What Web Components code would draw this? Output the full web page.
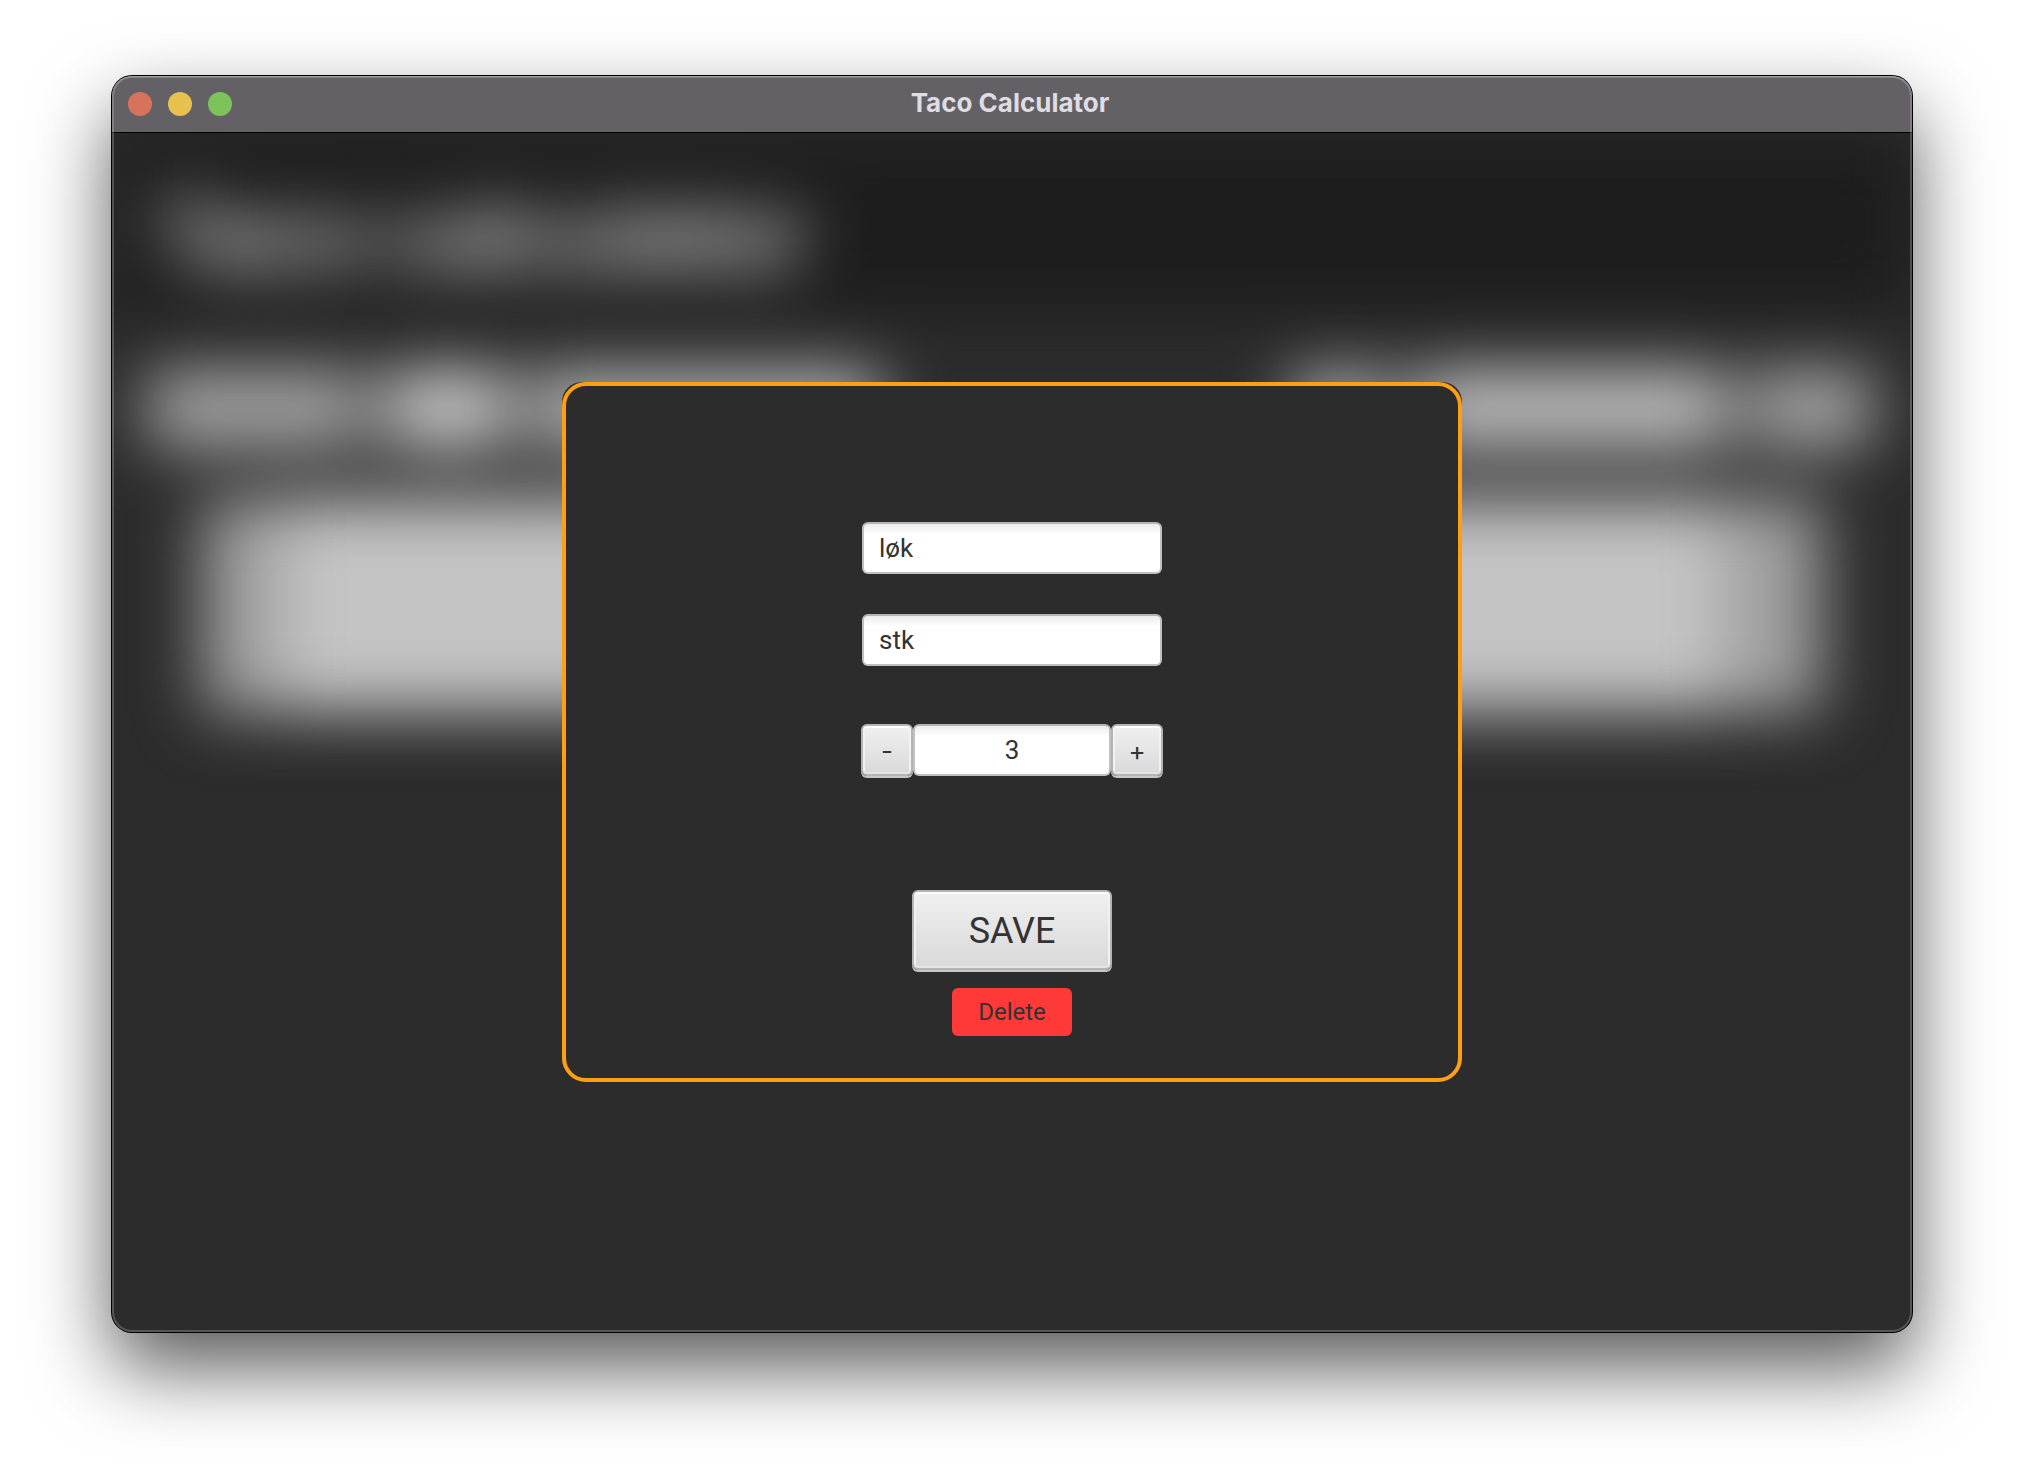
<!DOCTYPE html>
<html lang="en">
<head>
<meta charset="utf-8">
<title>Taco Calculator</title>
<style>
  html, body { height: 100%; margin: 0; }
  body {
    box-sizing: border-box;
    display: flex;
    min-height: 100vh;
    padding: 76px 112px 148px;
    background: #fff;
    color: #333;
    font-family: Inter, "Liberation Sans", sans-serif;
    overflow: hidden;
  }
</style>
</head>
<body>
<app-window heading="Taco Calculator">
  <recipe-backdrop></recipe-backdrop>
  <ingredient-dialog></ingredient-dialog>
</app-window>

<script>
const define = (name, html, setup) => {
  const template = document.createElement('template');
  template.innerHTML = html;
  customElements.define(name, class extends HTMLElement {
    connectedCallback() {
      if (this.shadowRoot) return;
      const root = this.attachShadow({ mode: 'open' });
      root.append(template.content.cloneNode(true));
      if (setup) setup(this, root);
    }
  });
};

define('app-window', `
  <style>
    :host {
      flex: 1; display: flex; flex-direction: column; position: relative;
      border-radius: 20px; background: #2c2c2c;
      box-shadow: 0 0 0 1px #000, 0 36px 80px rgba(0,0,0,.65);
    }
    /* light rim along the inside of the window edge */
    :host::after {
      content: ""; position: absolute; inset: 0; border-radius: 20px; pointer-events: none;
      box-shadow: inset 0 0 0 2px rgba(255,255,255,.2), inset 0 1px 0 rgba(255,255,255,.25);
    }
    header {
      display: grid; grid-template-columns: 1fr auto 1fr; align-items: center;
      height: 56px; padding: 0 16px;
      background: #636166; border-bottom: 1px solid #000;
      border-radius: 20px 20px 0 0;
    }
    .lights { display: flex; gap: 16px; }
    .lights button { width: 24px; height: 24px; padding: 0; border: 0; border-radius: 50%; }
    .close { background: #d8735b; }
    .min { background: #e6c150; }
    .max { background: #7ec25a; }
    h1 { margin: 0; padding: 0 4px 2px 0; font-size: 26px; line-height: 32px; font-weight: 700; color: #dfdce2; }
    main { flex: 1; display: grid; padding-bottom: 1px; overflow: hidden; border-radius: 0 0 20px 20px; }
    ::slotted(*) { grid-area: 1 / 1; }
  </style>
  <header>
    <div class="lights">
      <button class="close" aria-label="Close"></button>
      <button class="min" aria-label="Minimise"></button>
      <button class="max" aria-label="Zoom"></button>
    </div>
    <h1></h1>
  </header>
  <main><slot></slot></main>
`, (host, root) => { root.querySelector('h1').textContent = host.getAttribute('heading'); });

define('recipe-backdrop', `
  <style>
    :host { display: block; filter: blur(32px); }
    header { box-sizing: border-box; height: 180px; padding: 48px 44px 0; background: #1d1d1d; }
    h2 { margin: 0; font-size: 88px; line-height: 108px; font-weight: 600; color: #fff; white-space: nowrap; }
    .bar { display: flex; justify-content: space-between; padding: 58px 40px 0 36px; }
    .group { display: flex; gap: 20px; }
    .group i { height: 76px; border-radius: 6px; background: #a8a8a8; }
    .name { width: 216px; }
    .group .unit { width: 128px; background: #cccccc; }
    .group .add { width: 348px; background: #b8b8b8; }
    .count { width: 104px; }
    .group .search { width: 314px; background: #c4c4c4; }
    .go { width: 124px; }
    .list { display: flex; margin: 52px 90px 0; height: 214px; background: #a0a0a0; padding: 0 100px 0 80px; }
    .list i { flex: 1; background: #c4c4c4; }
  </style>
  <header><h2 aria-hidden="true">Taco calculator</h2></header>
  <div class="bar">
    <div class="group"><i class="name"></i><i class="unit"></i><i class="add"></i></div>
    <div class="group"><i class="count"></i><i class="search"></i><i class="go"></i></div>
  </div>
  <div class="list"><i></i></div>
`);

define('text-field', `
  <style>
    :host { display: block; }
    input {
      box-sizing: border-box; width: 100%; height: 52px; padding: 0 15px; margin: 0;
      border: 2px solid #c0c0c0; border-top-color: #b4b4b4; border-radius: 6px; outline: 0;
      background: linear-gradient(#ececec, #fff 10px);
      color: #333; font: 400 26px/32px Roboto, "Liberation Sans", sans-serif;
    }
    :host([centered]) input { text-align: center; }
  </style>
  <input type="text">
`, (host, root) => {
  const input = root.querySelector('input');
  input.value = host.getAttribute('value');
  input.setAttribute('aria-label', host.getAttribute('label'));
});

define('push-button', `
  <style>
    :host { display: block; }
    button {
      box-sizing: border-box; width: 100%; height: 52px; padding: 2px 0 0; margin: 0 0 2px; display: block;
      border: 2px solid #b4b4b4; border-radius: 6px;
      background: linear-gradient(#f0f0f0, #d9d9d9);
      box-shadow: 0 2px 0 #c6c6c6, inset 0 2px 0 #fff, inset 0 -2px 0 #e4e4e4,
                  inset 2px 0 0 #f2f2f2, inset -2px 0 0 #f2f2f2;
      color: #333; font: 400 26px/32px Inter, "Liberation Sans", sans-serif;
    }
    :host([kind]) button { font-family: Roboto, "Liberation Sans", sans-serif; }
    :host([kind="primary"]) button { height: 80px; font-size: 36px; line-height: 44px; }
    :host([kind="danger"]) button {
      height: 48px; margin: 0; padding: 0; border: 0; box-shadow: none; background: #ff3838;
      font-size: 24px; line-height: 28px;
    }
  </style>
  <button type="button"><slot></slot></button>
`);

define('number-stepper', `
  <style>
    :host { display: grid; grid-template-columns: 52px 198px 52px; }
  </style>
  <push-button>-</push-button>
  <text-field centered label="Amount" value="3"></text-field>
  <push-button>+</push-button>
`);

define('ingredient-dialog', `
  <style>
    :host {
      place-self: center; position: relative; width: 50%;
      background: #2c2c2c; border-radius: 20px;
    }
    form {
      box-sizing: border-box; display: flex; flex-direction: column; align-items: center;
      margin: 0; padding: 136px 0 42px; border: 4px solid #ffa014; border-radius: 24px;
    }
    .fields { display: grid; gap: 40px; width: 300px; }
    number-stepper { margin: 58px 0 112px; }
    .save { width: 200px; }
    .delete { width: 120px; margin-top: 16px; }
  </style>
  <form>
    <div class="fields">
      <text-field label="Ingredient" value="løk"></text-field>
      <text-field label="Unit" value="stk"></text-field>
    </div>
    <number-stepper></number-stepper>
    <push-button class="save" kind="primary">SAVE</push-button>
    <push-button class="delete" kind="danger">Delete</push-button>
  </form>
`);
</script>
</body>
</html>
